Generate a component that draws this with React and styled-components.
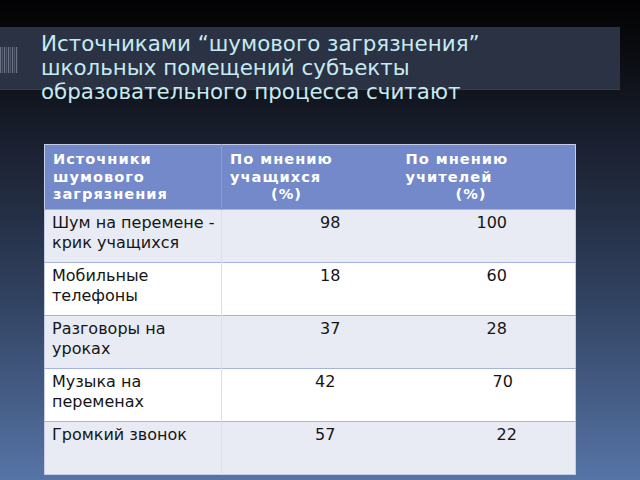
import React from 'react';
import styled, { createGlobalStyle } from 'styled-components';

const GlobalStyle = createGlobalStyle`
  html, body {
    margin: 0;
    padding: 0;
  }
  body {
    width: 640px;
    height: 480px;
    overflow: hidden;
    font-family: "DejaVu Sans", "Liberation Sans", sans-serif;
  }
`;

const Slide = styled.div`
  width: 640px;
  height: 480px;
  background: linear-gradient(to bottom, #020203 0%, #0b0d12 12%, #1a2030 30%, #2f3f5c 60%, #5674a6 100%);
  overflow: hidden;
`;

const TitleBand = styled.div`
  margin-top: 27px;
  width: 620px;
  height: 63px;
  background: #2b3243;
  border-bottom: 1px solid #353d50;
  display: flex;
  align-items: flex-start;
  box-sizing: border-box;
`;

const Marker = styled.div`
  width: 41px;
  padding-top: 20px;
  flex-shrink: 0;
`;

const Title = styled.h1`
  margin: 0;
  padding-top: 5px;
  font-family: "DejaVu Sans", sans-serif;
  font-weight: normal;
  font-size: 21.4px;
  line-height: 24px;
  color: #c6eaf3;
  white-space: nowrap;
`;

const TableWrap = styled.div`
  margin: 54px 0 0 44px;
`;

const Table = styled.table`
  width: 531px;
  border-collapse: collapse;
  table-layout: fixed;
  border: 1px solid #c4cce6;
`;

const HeadCell = styled.th`
  height: 65px;
  box-sizing: border-box;
  background: #7389c9;
  color: #ffffff;
  font-weight: bold;
  font-size: 14.6px;
  line-height: 17.5px;
  letter-spacing: 1px;
  text-align: left;
  vertical-align: top;
  padding: 5px 0 0 8px;
  ${(p) => p.$divider && 'border-left: 1px solid #8a9ccf;'}
`;

const HeadLine = styled.div`
  padding-left: ${(p) => p.$indent || 0}px;
  white-space: nowrap;
`;

const Row = styled.tr`
  background: ${(p) => (p.$alt ? '#ffffff' : '#e8ebf4')};
  border-top: 1px solid #a4b4de;
`;

const Cell = styled.td`
  height: 53px;
  box-sizing: border-box;
  vertical-align: top;
  padding: 3px 0 0 ${(p) => p.$pad || 7}px;
  font-size: 16px;
  line-height: 20px;
  color: #161616;
  white-space: nowrap;
  ${(p) => p.$divider && 'border-left: 1px solid #dcdfe8;'}
`;

const rows = [
  { name: ['Шум на перемене -', 'крик учащихся'], a: '98', ap: 98, b: '100', bp: 79 },
  { name: ['Мобильные', 'телефоны'], a: '18', ap: 98, b: '60', bp: 89 },
  { name: ['Разговоры на', 'уроках'], a: '37', ap: 98, b: '28', bp: 89 },
  { name: ['Музыка на', 'переменах'], a: '42', ap: 93, b: '70', bp: 95 },
  { name: ['Громкий звонок'], a: '57', ap: 93, b: '22', bp: 99 },
];

function StripeMark() {
  const bars = [];
  for (let i = 0; i < 9; i++) {
    bars.push(
      <rect key={i} x={i * 2} y="0" width="1.2" height="26" fill={i % 2 ? '#4d5466' : '#6a7184'} />
    );
  }
  return (
    <svg width="20" height="26" viewBox="0 0 20 26">
      {bars}
    </svg>
  );
}

export default function App() {
  return (
    <Slide>
      <GlobalStyle />
      <TitleBand>
        <Marker>
          <StripeMark />
        </Marker>
        <Title>
          Источниками “шумового загрязнения”
          <br />
          школьных помещений субъекты
          <br />
          образовательного процесса считают
        </Title>
      </TitleBand>
      <TableWrap>
        <Table>
          <colgroup>
            <col style={{ width: 177 }} />
            <col style={{ width: 176 }} />
            <col style={{ width: 178 }} />
          </colgroup>
          <thead>
            <tr>
              <HeadCell>
                <HeadLine>Источники</HeadLine>
                <HeadLine>шумового</HeadLine>
                <HeadLine>загрязнения</HeadLine>
              </HeadCell>
              <HeadCell $divider>
                <HeadLine>По мнению</HeadLine>
                <HeadLine>учащихся</HeadLine>
                <HeadLine $indent={41}>(%)</HeadLine>
              </HeadCell>
              <HeadCell>
                <HeadLine>По мнению</HeadLine>
                <HeadLine>учителей</HeadLine>
                <HeadLine $indent={50}>(%)</HeadLine>
              </HeadCell>
            </tr>
          </thead>
          <tbody>
            {rows.map((r, i) => (
              <Row key={i} $alt={i % 2 === 1}>
                <Cell>
                  {r.name.map((l, j) => (
                    <div key={j}>{l}</div>
                  ))}
                </Cell>
                <Cell $divider $pad={r.ap}>{r.a}</Cell>
                <Cell $pad={r.bp}>{r.b}</Cell>
              </Row>
            ))}
          </tbody>
        </Table>
      </TableWrap>
    </Slide>
  );
}
